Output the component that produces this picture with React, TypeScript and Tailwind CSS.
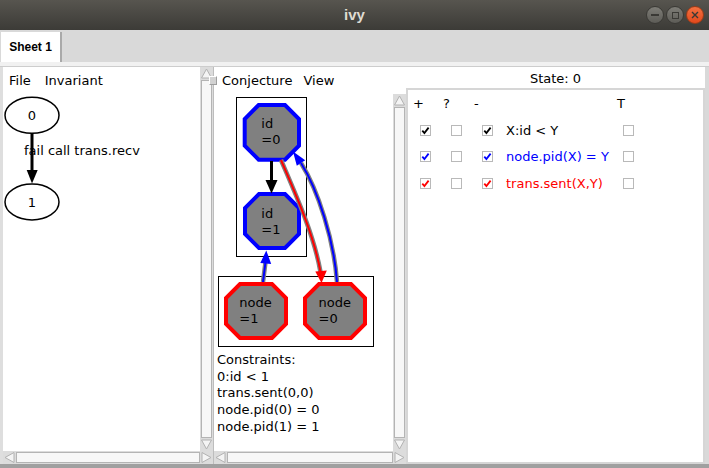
import React from 'react';

type Dir = 'up' | 'down' | 'left' | 'right';

const TRI: Record<Dir, string> = {
  up: '6.5,2 11.5,11 1.5,11',
  down: '1.5,2 11.5,2 6.5,11',
  left: '2,6.5 11,1.5 11,11.5',
  right: '2,1.5 2,11.5 11,6.5',
};

function Arrow({ dir }: { dir: Dir }) {
  return (
    <svg width="13" height="13" viewBox="0 0 13 13" className="shrink-0 block">
      <polygon points={TRI[dir]} fill="#f4f4f4" stroke="#b2b2b2" strokeWidth="1" />
    </svg>
  );
}

function VScroll() {
  return (
    <div className="w-[13px] shrink-0 flex flex-col bg-[#dcdcdc]">
      <Arrow dir="up" />
      <div className="flex-1 mx-[1px] border border-[#b4b4b4] bg-[#f7f7f7]" />
      <Arrow dir="down" />
    </div>
  );
}

function HScroll() {
  return (
    <div className="h-[13px] shrink-0 flex bg-[#dcdcdc]">
      <Arrow dir="left" />
      <div className="flex-1 my-[1px] border border-[#b4b4b4] bg-[#f7f7f7]" />
      <Arrow dir="right" />
    </div>
  );
}

function Check({ on, color, className = '' }: { on?: boolean; color?: string; className?: string }) {
  return (
    <span className={`w-[11px] h-[11px] shrink-0 border border-[#b9b9b9] bg-white flex items-center justify-center ${className}`}>
      {on && (
        <svg width="9" height="9" viewBox="0 0 9 9">
          <path d="M1.3 4.6 L3.4 7 L7.6 1.6" fill="none" stroke={color} strokeWidth="1.8" />
        </svg>
      )}
    </span>
  );
}

// octagon corners from the stroke-centre box
function oct(x0: number, y0: number, x1: number, y1: number, c: number) {
  return `${x0 + c},${y0} ${x1 - c},${y0} ${x1},${y0 + c} ${x1},${y1 - c} ${x1 - c},${y1} ${x0 + c},${y1} ${x0},${y1 - c} ${x0},${y0 + c}`;
}

const rows = [
  { text: 'X:id < Y', color: '#000000', cls: 'text-black' },
  { text: 'node.pid(X) = Y', color: '#0000ff', cls: 'text-[#0000ff]' },
  { text: 'trans.sent(X,Y)', color: '#ff0000', cls: 'text-[#ff0000]' },
];

const constraints = ['Constraints:', '0:id < 1', 'trans.sent(0,0)', 'node.pid(0) = 0', 'node.pid(1) = 1'];

function TitleBar() {
  return (
    <div className="h-[30px] shrink-0 relative flex items-center justify-center bg-linear-to-b from-[#57554f] to-[#3c3b37]">
      <span className="font-['Liberation_Sans',sans-serif] font-bold text-[15px] text-[#dfdbd2]">ivy</span>
      <div className="absolute right-[5px] top-[6px] flex gap-[2px]">
        <span className="w-[18px] h-[18px] rounded-full border border-[#3a3935] bg-linear-to-b from-[#7e7d77] to-[#5d5c57] flex items-center justify-center">
          <span className="w-[8px] h-[2px] bg-[#3a3935]" />
        </span>
        <span className="w-[18px] h-[18px] rounded-full border border-[#3a3935] bg-linear-to-b from-[#7e7d77] to-[#5d5c57] flex items-center justify-center">
          <span className="w-[7px] h-[7px] border-[1.5px] border-[#3a3935]" />
        </span>
        <span className="w-[18px] h-[18px] rounded-full border border-[#9c3b17] bg-linear-to-b from-[#f37040] to-[#e2481b] flex items-center justify-center">
          <svg width="8" height="8" viewBox="0 0 8 8">
            <path d="M1 1 L7 7 M7 1 L1 7" stroke="#3a3935" strokeWidth="1.4" />
          </svg>
        </span>
      </div>
    </div>
  );
}

function LeftPane() {
  return (
    <div className="w-[210px] shrink-0 flex flex-col">
      <div className="flex-1 flex min-h-0">
        <div className="w-[197px] bg-white flex flex-col">
          <div className="h-[27px] shrink-0 pt-[6px] pl-[6px] flex gap-[14px] leading-[15px]">
            <span>File</span>
            <span>Invariant</span>
          </div>
          <svg width="197" height="357" viewBox="3 94 197 357" className="block">
            <ellipse cx="32" cy="115.3" rx="27" ry="18" fill="white" stroke="black" strokeWidth="1.5" />
            <text x="32" y="120" textAnchor="middle" fontSize="13">0</text>
            <line x1="32" y1="133" x2="32" y2="171" stroke="black" strokeWidth="3" />
            <polygon points="26.7,170 37.7,170 32,183.5" fill="black" />
            <text x="24" y="155" fontSize="13">fail call trans.recv</text>
            <ellipse cx="32" cy="202" rx="27" ry="18" fill="white" stroke="black" strokeWidth="1.5" />
            <text x="32" y="206.7" textAnchor="middle" fontSize="13">1</text>
          </svg>
        </div>
        <VScroll />
      </div>
      <HScroll />
    </div>
  );
}

function MiddlePane() {
  return (
    <div className="w-[192px] shrink-0 flex flex-col">
      <div className="h-[27px] shrink-0 bg-white pt-[6px] pl-[8px] flex gap-[11px] leading-[15px]">
        <span>Conjecture</span>
        <span>View</span>
      </div>
      <div className="flex-1 flex min-h-0">
        <div className="w-[179px] bg-white flex flex-col">
          <svg width="179" height="258" viewBox="214 94 179 258" className="block shrink-0">
            <rect x="236.5" y="97.5" width="70" height="159" fill="none" stroke="black" strokeWidth="1" />
            <rect x="218.5" y="276.5" width="155" height="70" fill="none" stroke="black" strokeWidth="1" />

            <polygon points={oct(244.7, 105, 299, 159.7, 14)} fill="#808080" stroke="#0000ff" strokeWidth="4" />
            <text x="261.3" y="127.7" fontSize="13">id</text>
            <text x="261.3" y="144.3" fontSize="13">=0</text>

            <polygon points={oct(245, 194, 299, 248, 14)} fill="#808080" stroke="#0000ff" strokeWidth="4" />
            <text x="261.3" y="217.7" fontSize="13">id</text>
            <text x="261.3" y="234.3" fontSize="13">=1</text>

            <polygon points={oct(226, 284, 286, 338, 14)} fill="#808080" stroke="#ff0000" strokeWidth="4" />
            <text x="239.3" y="306.7" fontSize="13">node</text>
            <text x="239.3" y="323.3" fontSize="13">=1</text>

            <polygon points={oct(305, 284, 365, 338, 14)} fill="#808080" stroke="#ff0000" strokeWidth="4" />
            <text x="318.6" y="306.7" fontSize="13">node</text>
            <text x="318.6" y="323.3" fontSize="13">=0</text>

            {/* id=0 -> id=1 */}
            <line x1="271.5" y1="161" x2="271.5" y2="181" stroke="black" strokeWidth="3" />
            <polygon points="265.5,180 277.5,180 271.5,193.5" fill="black" />

            {/* node=1 -> id=1 */}
            <path d="M263 282 L265.5 262" fill="none" stroke="#808080" strokeWidth="4.5" />
            <path d="M263 282 L265.5 262" fill="none" stroke="#0000ff" strokeWidth="2" />
            <polygon points="260.3,263 271.2,264 266.3,250.5" fill="#0000ff" />

            {/* id=0 -> node=0 */}
            <path d="M281 160 C296 195, 314 235, 320.5 272" fill="none" stroke="#808080" strokeWidth="4.5" />
            <path d="M281 160 C296 195, 314 235, 320.5 272" fill="none" stroke="#ff0000" strokeWidth="2" />
            <polygon points="315.3,271.5 326.8,270.5 321.5,283" fill="#ff0000" />

            {/* node=0 -> id=0 */}
            <path d="M337 282 C334 240, 318 190, 301 163" fill="none" stroke="#808080" strokeWidth="4.5" />
            <path d="M337 282 C334 240, 318 190, 301 163" fill="none" stroke="#0000ff" strokeWidth="2" />
            <polygon points="305.2,160.2 296.8,165.8 293,151.5" fill="#0000ff" />
          </svg>
          <div className="pl-[3px] leading-[16.7px]">
            {constraints.map((c) => (
              <div key={c}>{c}</div>
            ))}
          </div>
        </div>
        <VScroll />
      </div>
      <HScroll />
    </div>
  );
}

function RightPane() {
  return (
    <div className="w-[299px] shrink-0 flex flex-col bg-white">
      <div className="h-[21px] shrink-0 pt-[4px] text-center leading-[15px]">State: 0</div>
      <div className="flex-1 border-2 border-[#d6d6d6] leading-[15px]">
        <div className="h-[26.7px] flex items-center pl-[5px]">
          <span className="w-[30px]">+</span>
          <span className="w-[31px]">?</span>
          <span className="w-[143px]">-</span>
          <span>T</span>
        </div>
        {rows.map((r) => (
          <div key={r.text} className="h-[26.7px] flex items-center pl-[12px]">
            <Check on color={r.color} />
            <Check className="ml-[20px]" />
            <Check on color={r.color} className="ml-[20px]" />
            <span className={`ml-[13px] w-[117px] ${r.cls}`}>{r.text}</span>
            <Check />
          </div>
        ))}
      </div>
    </div>
  );
}

export default function App() {
  return (
    <div className="w-[709px] h-[468px] flex flex-col overflow-hidden bg-[#d9d9d9] font-['DejaVu_Sans',sans-serif] text-[13px] text-black">
      <TitleBar />
      <div className="h-[32px] shrink-0 flex items-end bg-[#d9d9d9]">
        <div className="ml-[1px] w-[61px] h-[30px] bg-white border-r-2 border-[#a9a9a9] flex items-center justify-center font-['Liberation_Sans',sans-serif] font-bold text-[12px]">
          Sheet 1
        </div>
      </div>
      <div className="h-[5px] shrink-0 bg-[#f1f1f1] border-b border-[#cdcdcd]" />
      <div className="flex-1 flex min-h-0">
        <div className="w-[3px] shrink-0 bg-[#dedede]" />
        <LeftPane />
        <div className="w-[1px] shrink-0 bg-[#bdbdbd] relative">
          <span className="absolute left-[-4px] top-[9px] w-[8px] h-[9px] bg-[#d2d2d2] border border-[#9e9e9e] border-t-white border-l-white" />
        </div>
        <MiddlePane />
        <RightPane />
        <div className="flex-1 bg-[#d9d9d9]" />
      </div>
      <div className="h-[4px] shrink-0 bg-[#a0a0a0]" />
    </div>
  );
}
